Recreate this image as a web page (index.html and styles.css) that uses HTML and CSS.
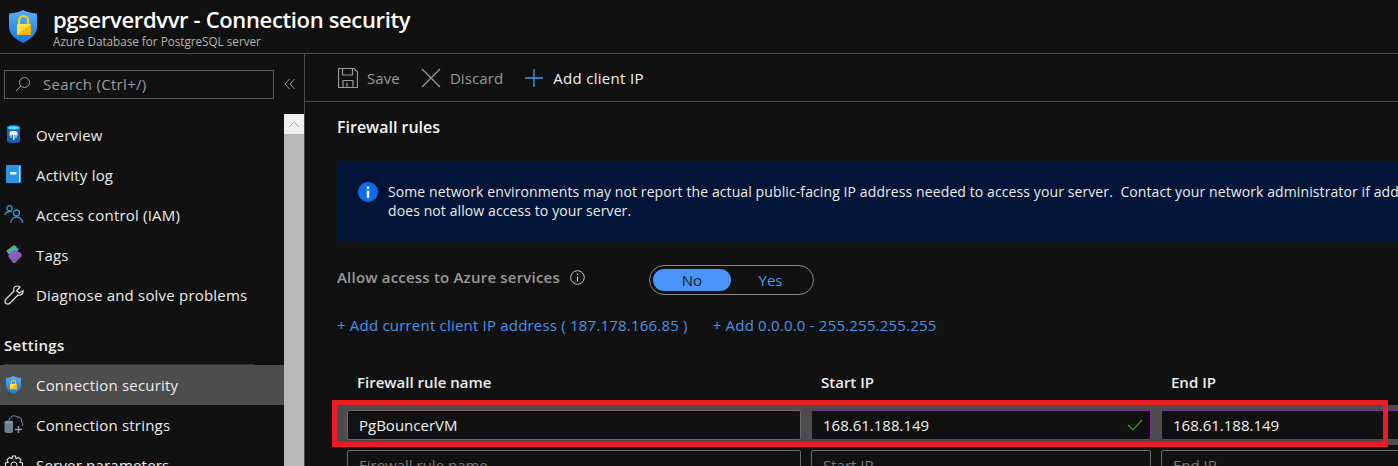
FILE: index.html

```html
<!DOCTYPE html>
<html lang="en">
<head>
    <meta charset="UTF-8">
    <title>pgserverdvvr - Connection security</title>
    <link rel="stylesheet" href="styles.css">
</head>
<body>

<header class="blade-header">
    <svg class="blade-icon" viewBox="0 0 30 35" width="30" height="35">
        <defs>
            <linearGradient id="shieldBlue" x1="0" y1="0" x2="0" y2="1">
                <stop offset="0" stop-color="#58aef5"/>
                <stop offset="1" stop-color="#1478dc"/>
            </linearGradient>
            <linearGradient id="lockGold" x1="0" y1="0" x2="1" y2="1">
                <stop offset="0.5" stop-color="#ffdf40"/>
                <stop offset="0.5" stop-color="#f4b800"/>
            </linearGradient>
        </defs>
        <path d="M15 1 C19 3 25 4.500 29 4.500 V18 C29 26 21 31 15 34 C9 31 1 26 1 18 V4.500 C5 4.500 11 3 15 1 Z" fill="url(#shieldBlue)"/>
        <path d="M11 15 V11.500 a4.500 4.500 0 0 1 9 0 V15" fill="none" stroke="#f4cd30" stroke-width="2.200"/>
        <rect x="9" y="15" width="14" height="11" rx="1" fill="url(#lockGold)"/>
    </svg>
    <div>
        <h1 class="blade-title">pgserverdvvr - Connection security</h1>
        <div class="blade-subtitle">Azure Database for PostgreSQL server</div>
    </div>
</header>

<div class="blade-body">
    <nav class="sidebar">
        <div class="search-row">
            <div class="search-box">
                <svg viewBox="0 0 16 16" width="16" height="16"><circle cx="9.5" cy="6.5" r="5" fill="none" stroke="#a0a0a0"/><path d="M6 10 L1 15" stroke="#a0a0a0" fill="none"/></svg>
                <span>Search (Ctrl+/)</span>
            </div>
            <svg class="collapse" viewBox="0 0 12 12" width="12" height="12"><path d="M5.5 1 L1 6 L5.5 11 M10.5 1 L6 6 L10.5 11" fill="none" stroke="#a0a0a0"/></svg>
        </div>
        <div class="nav-scroll">
            <div class="nav-list">
                <div class="nav-item">
                    <svg viewBox="0 0 20 20" width="20" height="20"><path d="M3 2.500 V16 C3 18.600 16 18.600 16 16 V2.500 Z" fill="#0f67bd"/><ellipse cx="9.500" cy="2.500" rx="6.500" ry="2.500" fill="#1b8fe0"/><ellipse cx="9.500" cy="2.700" rx="5" ry="1.500" fill="#50e0f5"/><path d="M5.500 7 C7 5.800 12 5.800 13.500 7 V11 L12.500 10 V13 H11.500 V10 H10.500 V15 H9 V10 H7.500 V13 H6.500 V10 L5.500 11 Z" fill="#eef6fb"/></svg>
                    <span>Overview</span>
                </div>
                <div class="nav-item">
                    <svg viewBox="0 0 20 20" width="20" height="20"><rect x="2" y="0" width="15" height="18" rx="1" fill="#2b92ea"/><rect x="15" y="1" width="1.200" height="16" fill="#cfe8fb"/><rect x="6" y="7" width="6.500" height="2.500" fill="#f4f9fd"/></svg>
                    <span>Activity log</span>
                </div>
                <div class="nav-item">
                    <svg viewBox="0 0 20 20" width="20" height="20"><circle cx="5.500" cy="3.200" r="2.600" fill="none" stroke="#3a96c8" stroke-width="1.300"/><path d="M0.500 10 C1.500 7.500 3.500 6.500 5.500 6.500 C6.500 6.500 7 6.600 8 7" fill="none" stroke="#3a96c8" stroke-width="1.300"/><circle cx="12.500" cy="8" r="3" fill="none" stroke="#3a96c8" stroke-width="1.300"/><path d="M6.500 18 C7 14.500 9.500 12 12.500 12 C15.500 12 18 14.500 18.800 18" fill="none" stroke="#3a96c8" stroke-width="1.300"/></svg>
                    <span>Access control (IAM)</span>
                </div>
                <div class="nav-item">
                    <svg viewBox="0 0 20 20" width="20" height="20"><path d="M2 6 L10 0 L13 2 L7 10 Z" fill="#6bb02e"/><path d="M3 8 L10 2 L15 4 L9 12 Z" fill="#45a5e0"/><path d="M4 11 L10 5 L17 8 L18 11 L11 18 H9 Z" fill="#8a5db0"/></svg>
                    <span>Tags</span>
                </div>
                <div class="nav-item">
                    <svg viewBox="0 0 20 20" width="20" height="20"><path d="M13 1 C10.500 1 9 3.500 10 6 L1.500 14.500 C0.500 16 1 18 2 18.500 C3.500 19.500 5 19 6 18 L14 10 C17 11 19.500 8.500 19 5.500 L15.500 8 L12.500 6 L16 2 C15 1.300 14 1 13 1 Z" fill="none" stroke="#e6e6e6" stroke-width="1.200"/></svg>
                    <span>Diagnose and solve problems</span>
                </div>
                <div class="nav-heading">Settings</div>
                <div class="nav-item active">
                    <svg viewBox="0 0 20 20" width="20" height="20"><path d="M9.500 1 C12 2 14.500 3 17 3 V10 C17 14.500 13 17.500 9.500 19 C6 17.500 2 14.500 2 10 V3 C4.500 3 7 2 9.500 1 Z" fill="url(#shieldBlue)"/><path d="M7.500 9 V7 a2 2 0 0 1 4 0 V9" fill="none" stroke="#f4cd30" stroke-width="1.200"/><rect x="6" y="9" width="7" height="5.500" fill="url(#lockGold)"/></svg>
                    <span>Connection security</span>
                </div>
                <div class="nav-item">
                    <svg viewBox="0 0 20 20" width="20" height="20"><path d="M5 5 C5.500 1.500 10 -0.500 13 2 C16 1.500 18.500 4 17.500 7 C18.500 8 19 9.500 18.500 11" fill="none" stroke="#8a97a3"/><path d="M0.500 7 V16.500 C0.500 18.500 9 18.500 9 16.500 V7 Z" fill="#6f8192"/><ellipse cx="4.750" cy="7" rx="4.250" ry="1.500" fill="#8a97a3"/><path d="M14.500 11 V18 M11 14.500 H18" stroke="#8a97a3" stroke-width="1.500"/></svg>
                    <span>Connection strings</span>
                </div>
                <div class="nav-item">
                    <svg viewBox="0 0 20 20" width="20" height="20"><circle cx="10" cy="10" r="3" fill="none" stroke="#e0e0e0"/><path d="M8.500 1 H11.500 L12 3.600 L14.500 2.400 L17 4.900 L15.800 7.400 L18.500 8 V11.500 L15.800 12.500 L17 15 L14.500 17.500 L12 16.400 L11.500 19 H8.500 L8 16.400 L5.500 17.500 L3 15 L4.200 12.500 L1.500 11.500 V8 L4.200 7.400 L3 4.900 L5.500 2.400 L8 3.600 Z" fill="none" stroke="#e0e0e0" stroke-width="1.100"/></svg>
                    <span>Server parameters</span>
                </div>
            </div>
            <div class="scrollbar">
                <div class="scroll-button">
                    <svg viewBox="0 0 12 7" width="12" height="7"><path d="M1 6 L6 1 L11 6" fill="none" stroke="#a8a8a8"/></svg>
                </div>
            </div>
        </div>
    </nav>

    <main class="content">
        <div class="toolbar">
            <div class="tool disabled">
                <svg viewBox="0 0 20 20" width="20" height="20"><path d="M0.5 0.5 H16 L19.5 4 V19.5 H0.5 Z M4.5 0.5 V7 H14.5 V0.5 M5 19.5 V12.5 H15 V19.5 M9 14.5 V19.5" fill="none" stroke="#9a9a9a" stroke-width="1.2"/></svg>
                <span>Save</span>
            </div>
            <div class="tool disabled">
                <svg viewBox="0 0 20 20" width="20" height="20"><path d="M1 1 L19 19 M19 1 L1 19" fill="none" stroke="#9a9a9a" stroke-width="1.3"/></svg>
                <span>Discard</span>
            </div>
            <div class="tool">
                <svg viewBox="0 0 20 20" width="20" height="20"><path d="M10 1 V19 M1 10 H19" fill="none" stroke="#4a9bf0" stroke-width="1.3"/></svg>
                <span>Add client IP</span>
            </div>
        </div>

        <div class="panel">
            <h2 class="section-title">Firewall rules</h2>

            <div class="banner">
                <svg viewBox="0 0 20 20" width="20" height="20"><circle cx="10" cy="10" r="10" fill="#0f6cf0"/><rect x="8.8" y="8.5" width="2.4" height="7.5" fill="#fff"/><rect x="8.8" y="4.5" width="2.4" height="2.4" fill="#fff"/></svg>
                <p>Some network environments may not report the actual public-facing IP address needed to access your server.&nbsp; Contact your network administrator if add<br>does not allow access to your server.</p>
            </div>

            <div class="allow-row">
                <span class="allow-label">Allow access to Azure services</span>
                <svg class="allow-info" viewBox="0 0 15 15" width="15" height="15"><circle cx="7.5" cy="7.5" r="6.8" fill="none" stroke="#c8c8c8"/><path d="M7.5 6.5 V11.5 M7.5 3.5 V5" fill="none" stroke="#c8c8c8" stroke-width="1.2"/></svg>
                <div class="toggle">
                    <span class="toggle-opt selected">No</span>
                    <span class="toggle-opt">Yes</span>
                </div>
            </div>

            <div class="link-row">
                <a>+ Add current client IP address ( 187.178.166.85 )</a>
                <a>+ Add 0.0.0.0 - 255.255.255.255</a>
            </div>

            <div class="rule-table">
                <div class="rule-head">
                    <div class="col-name">Firewall rule name</div>
                    <div class="col-ip">Start IP</div>
                    <div class="col-ip">End IP</div>
                </div>
                <div class="rule-row filled">
                    <div class="field col-name">PgBouncerVM</div>
                    <div class="field col-ip dirty">168.61.188.149
                        <svg viewBox="0 0 16 12" width="16" height="12"><path d="M1 6 L6 11 L15 1" fill="none" stroke="#4c9a0e" stroke-width="1.2"/></svg>
                    </div>
                    <div class="field col-ip dirty">168.61.188.149</div>
                </div>
                <div class="rule-row">
                    <div class="field col-name empty">Firewall rule name</div>
                    <div class="field col-ip empty">Start IP</div>
                    <div class="field col-ip empty">End IP</div>
                </div>
            </div>
        </div>
    </main>
</div>

<div class="red-box"></div>

</body>
</html>
```

FILE: styles.css

```css
html, body {
    height: 466px;
    overflow: hidden;
}

body {
    margin: 0;
    position: relative;
    background-color: #111;
    color: #f0f0f0;
    font-family: "Open Sans", "Noto Sans", sans-serif;
    font-size: 15px;
}

.blade-header {
    display: flex;
    align-items: flex-start;
    gap: 15px;
    height: 53px;
    padding-left: 8px;
    border-bottom: 1px solid #4a4a4a;
}

.blade-icon {
    margin-top: 9px;
}

.blade-title {
    margin: 4px 0 0;
    font-size: 22px;
    line-height: 30px;
    font-weight: 600;
    letter-spacing: -0.35px;
    color: #fff;
}

.blade-subtitle {
    font-size: 11.7px;
    line-height: 14px;
    color: #b4b4b4;
}

.blade-body {
    display: flex;
    height: 412px;
}

.sidebar {
    width: 304px;
    flex: none;
    border-right: 1px solid #4a4a4a;
}

.search-row {
    display: flex;
    align-items: center;
    height: 60px;
    padding-left: 4px;
    gap: 10px;
}

.search-box {
    display: flex;
    align-items: center;
    gap: 12px;
    width: 270px;
    height: 29px;
    padding-left: 10px;
    box-sizing: border-box;
    border: 1px solid #5c5c5c;
    color: #9c9c9c;
    letter-spacing: 0.3px;
}

.nav-scroll {
    display: flex;
}

.nav-list {
    width: 284px;
    flex: none;
    padding-top: 1px;
}

.nav-item {
    display: flex;
    align-items: center;
    height: 40px;
    padding-left: 4px;
    color: #ececec;
    letter-spacing: 0.2px;
}

.nav-item svg {
    margin-right: 12px;
}

.nav-item.active {
    background-color: #4d4d4d;
}

.nav-heading {
    height: 50px;
    padding-top: 20px;
    box-sizing: border-box;
    margin: 0 30px 0 4px;
    font-weight: 600;
    line-height: 20px;
    letter-spacing: 0.3px;
    border-bottom: 1px solid #333;
}

.scrollbar {
    width: 20px;
    height: 360px;
    background-color: #b8b8b8;
}

.scroll-button {
    display: flex;
    align-items: center;
    justify-content: center;
    height: 20px;
    background-color: #f0f0f0;
}

.content {
    flex: 1;
    min-width: 0;
    overflow: hidden;
}

.toolbar {
    display: flex;
    align-items: center;
    gap: 21px;
    height: 47px;
    padding-left: 33px;
    border-bottom: 1px solid #4a4a4a;
}

.tool {
    display: flex;
    align-items: center;
    gap: 9px;
    letter-spacing: 0.1px;
}

.tool:last-child {
    letter-spacing: 0.3px;
}

.tool.disabled {
    color: #9a9a9a;
}

.panel {
    padding-left: 32px;
}

.section-title {
    margin: 0;
    height: 59px;
    padding-top: 14px;
    box-sizing: border-box;
    font-size: 16px;
    line-height: 22px;
    font-weight: 600;
    color: #f4f4f4;
}

.banner {
    display: flex;
    align-items: flex-start;
    gap: 10px;
    height: 80px;
    padding: 21px 0 0 21px;
    box-sizing: border-box;
    background-color: #001537;
    white-space: nowrap;
}

.banner svg {
    flex: none;
}

.banner p {
    margin: 0;
    font-size: 14px;
    line-height: 19px;
    letter-spacing: 0.1px;
    color: #ececec;
}

.allow-row {
    display: flex;
    align-items: center;
    height: 30px;
    margin-top: 24px;
}

.allow-label {
    width: 233px;
    flex: none;
    font-weight: 600;
    letter-spacing: 0.2px;
    color: #9a9a9a;
    margin-top: -6px;
}

.allow-info {
    margin-top: -5px;
}

.toggle {
    display: flex;
    width: 165px;
    height: 30px;
    margin-left: 64px;
    padding: 3px;
    box-sizing: border-box;
    border: 1px solid #8a8a8a;
    border-radius: 15px;
}

.toggle-opt {
    flex: 1;
    text-align: center;
    line-height: 22px;
    color: #4a9bf0;
}

.toggle-opt.selected {
    flex: none;
    width: 78px;
    border-radius: 11px;
    background-color: #4a94f8;
    color: #0a1a30;
}

.link-row {
    display: flex;
    gap: 25px;
    height: 22px;
    margin-top: 19px;
    line-height: 22px;
    color: #4a94e8;
    letter-spacing: 0.2px;
}

.rule-table {
    margin-top: 36px;
}

.rule-head {
    display: flex;
    gap: 10px;
    height: 33px;
    padding: 0 10px 0 20px;
    font-weight: 600;
    line-height: 20px;
    color: #ececec;
}

.rule-row {
    display: flex;
    gap: 10px;
    height: 40px;
    padding: 5px 10px;
    box-sizing: border-box;
}

.rule-row.filled {
    background-color: #4d4d4d;
}

.col-name {
    width: 454px;
    flex: none;
}

.col-ip {
    width: 340px;
    flex: none;
}

.field {
    display: flex;
    align-items: center;
    justify-content: space-between;
    height: 30px;
    padding: 0 7px 0 11px;
    box-sizing: border-box;
    background-color: #111;
    border: 1px solid #6a6a6a;
    border-radius: 2px;
    color: #f0f0f0;
}

.field.dirty {
    border-color: #7a2a96;
}

.field.empty {
    color: #7a7a7a;
}

.red-box {
    position: absolute;
    left: 332px;
    top: 400px;
    width: 1056px;
    height: 47px;
    box-sizing: border-box;
    border: 5px solid #ed1c24;
}
```
